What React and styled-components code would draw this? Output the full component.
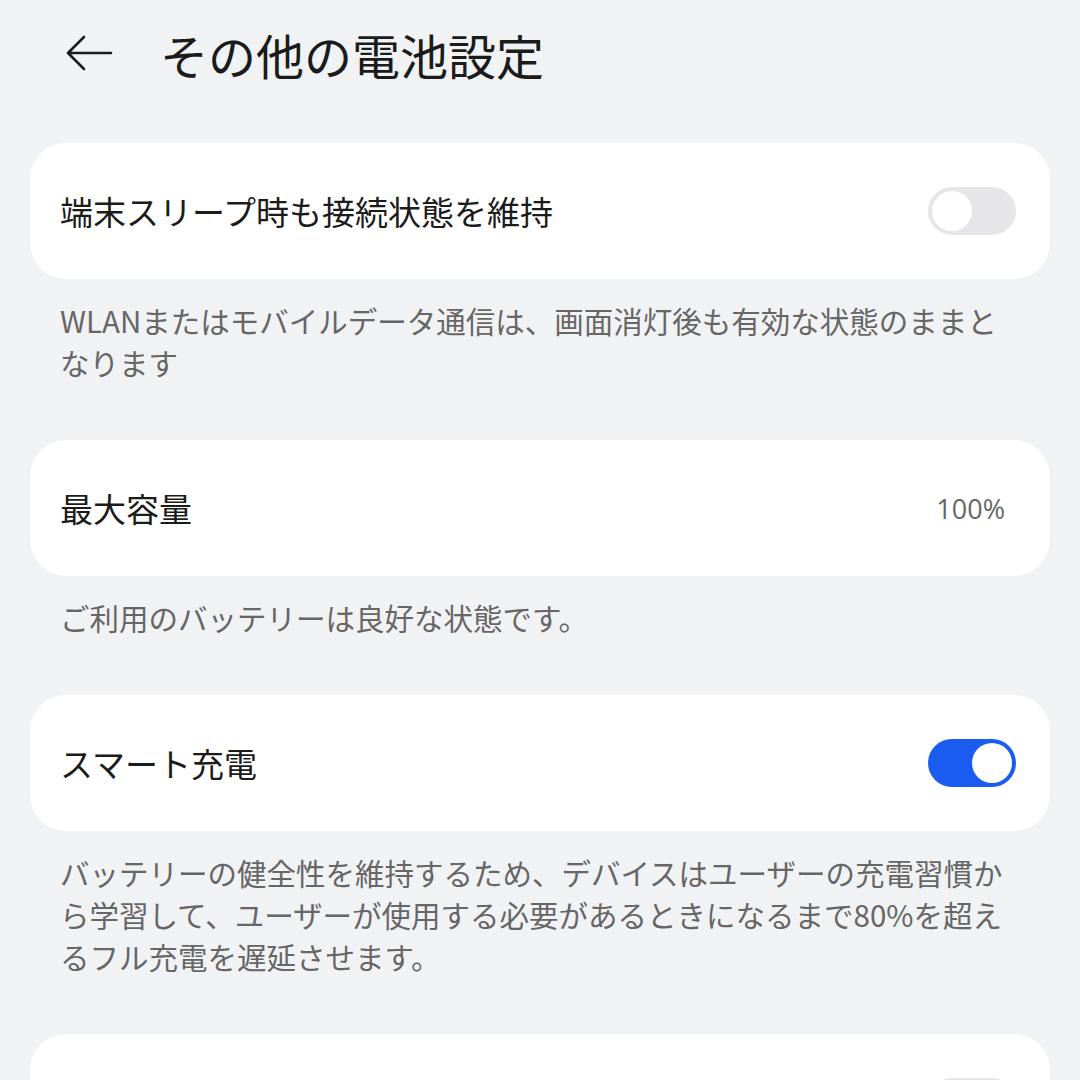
import React from "react";
import styled, { createGlobalStyle } from "styled-components";

const GlobalStyle = createGlobalStyle`
  html, body {
    margin: 0;
    padding: 0;
    background: #f1f2f4;
  }
  body {
    font-family: "Noto Sans CJK JP", "Noto Sans", sans-serif;
    color: #1b1b1b;
  }
`;

const settings = [
  {
    label: "端末スリープ時も接続状態を維持",
    toggle: false,
    note: "WLANまたはモバイルデータ通信は、画面消灯後も有効な状態のままとなります",
  },
  {
    label: "最大容量",
    value: "100%",
    note: "ご利用のバッテリーは良好な状態です。",
  },
  {
    label: "スマート充電",
    toggle: true,
    note: "バッテリーの健全性を維持するため、デバイスはユーザーの充電習慣から学習して、ユーザーが使用する必要があるときになるまで80%を超えるフル充電を遅延させます。",
  },
  { label: "", toggle: false },
];

function Screen() {
  return (
    <Page>
      <Header>
        <BackButton>
          <svg width="50" height="40" viewBox="0 0 50 40" fill="none">
            <path
              d="M47 20H4M20 4L4 20l16 16"
              stroke="#1b1b1b"
              strokeWidth="2.6"
              strokeLinecap="round"
              strokeLinejoin="round"
            />
          </svg>
        </BackButton>
        <Title>その他の電池設定</Title>
      </Header>
      {settings.map((s, i) => (
        <Group key={i}>
          <Card>
            <Label>{s.label}</Label>
            {s.value && <Value>{s.value}</Value>}
            {s.toggle !== undefined && <Switch on={s.toggle} />}
          </Card>
          {s.note && <Note>{s.note}</Note>}
        </Group>
      ))}
    </Page>
  );
}

function Switch({ on }) {
  return (
    <Track $on={on}>
      <Knob $on={on} />
    </Track>
  );
}

export default function App() {
  return (
    <>
      <GlobalStyle />
      <Screen />
    </>
  );
}

const Page = styled.div`
  width: 1080px;
  height: 1080px;
  overflow: hidden;
  padding: 0 30px;
  box-sizing: border-box;
`;

const Header = styled.header`
  display: flex;
  align-items: center;
  height: 110px;
  padding-left: 34px;
  margin-bottom: 33px;
`;

const BackButton = styled.div`
  display: flex;
  align-items: center;
  width: 96px;
  margin-top: -4px;
`;

const Title = styled.h1`
  margin: 0;
  font-size: 48px;
  font-weight: 400;
  letter-spacing: 0;
  margin-top: -2px;
`;

const Group = styled.section``;

const Card = styled.div`
  display: flex;
  align-items: center;
  justify-content: space-between;
  height: 136px;
  padding: 0 34px 0 30px;
  background: #ffffff;
  border-radius: 36px;
  box-sizing: border-box;
`;

const Label = styled.span`
  font-size: 33px;
  font-weight: 400;
  color: #1b1b1b;
`;

const Value = styled.span`
  font-size: 27px;
  color: #666666;
  margin-right: 11px;
  font-family: "Open Sans", "Noto Sans", sans-serif;
`;

const Note = styled.p`
  margin: 0;
  padding: 20px 40px 57px 30px;
  font-size: 29.5px;
  line-height: 42px;
  color: #666666;
`;

const Track = styled.div`
  width: 88px;
  height: 48px;
  border-radius: 24px;
  box-sizing: border-box;
  padding: 4px;
  display: flex;
  justify-content: ${(p) => (p.$on ? "flex-end" : "flex-start")};
  background: ${(p) => (p.$on ? "#1a5bf0" : "#e6e6e8")};
`;

const Knob = styled.div`
  width: 40px;
  height: 40px;
  border-radius: 50%;
  background: #ffffff;
`;
